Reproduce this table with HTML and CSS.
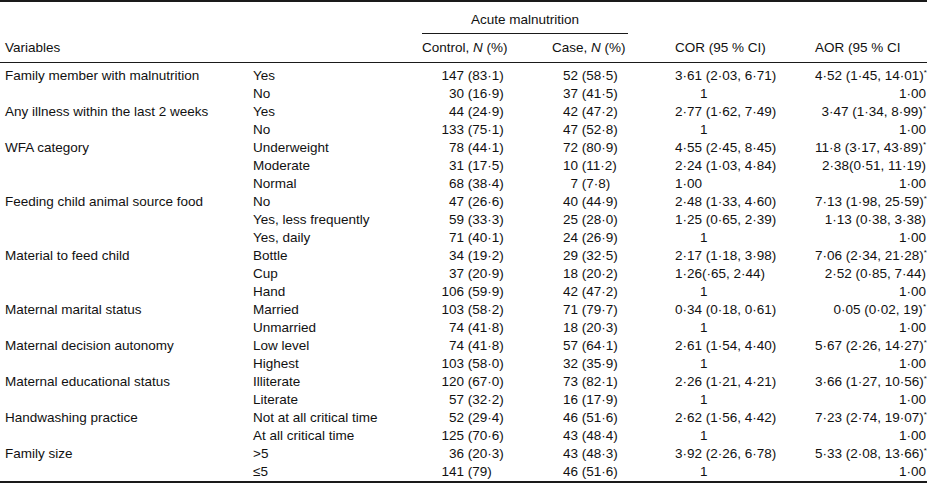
FILE: index.html
```html
<!DOCTYPE html>
<html>
<head>
<meta charset="utf-8">
<link rel="stylesheet" href="styles.css">
</head>
<body>
<table class="tbl">
  <colgroup>
    <col class="c-var"><col class="c-cat"><col class="c-ctl"><col class="c-case"><col class="c-cor"><col class="c-aor">
  </colgroup>
  <thead>
    <tr class="h1">
      <th colspan="2"></th>
      <th colspan="2" class="span"><div class="span-rule">Acute malnutrition</div></th>
      <th></th><th></th>
    </tr>
    <tr class="h2">
      <th colspan="2" class="var">Variables</th>
      <th class="ctl">Control, <i>N</i> (%)</th>
      <th class="case">Case, <i>N</i> (%)</th>
      <th class="cor">COR (95 % CI)</th>
      <th class="aor">AOR (95 % CI</th>
    </tr>
  </thead>
  <tbody>
    <tr class="first"><td class="var">Family member with malnutrition</td><td class="cat">Yes</td><td class="ctl"><div class="np"><span class="n">147</span><span>&nbsp;(83·1)</span></div></td><td class="case"><div class="np"><span class="n">52</span><span>&nbsp;(58·5)</span></div></td><td class="cor">3·61 (2·03, 6·71)</td><td class="aor">4·52 (1·45, 14·01)<sup>*</sup></td></tr>
    <tr><td class="var"></td><td class="cat">No</td><td class="ctl"><div class="np"><span class="n">30</span><span>&nbsp;(16·9)</span></div></td><td class="case"><div class="np"><span class="n">37</span><span>&nbsp;(41·5)</span></div></td><td class="cor one">1</td><td class="aor">1·00</td></tr>
    <tr><td class="var">Any illness within the last 2 weeks</td><td class="cat">Yes</td><td class="ctl"><div class="np"><span class="n">44</span><span>&nbsp;(24·9)</span></div></td><td class="case"><div class="np"><span class="n">42</span><span>&nbsp;(47·2)</span></div></td><td class="cor">2·77 (1·62, 7·49)</td><td class="aor">3·47 (1·34, 8·99)<sup>*</sup></td></tr>
    <tr><td class="var"></td><td class="cat">No</td><td class="ctl"><div class="np"><span class="n">133</span><span>&nbsp;(75·1)</span></div></td><td class="case"><div class="np"><span class="n">47</span><span>&nbsp;(52·8)</span></div></td><td class="cor one">1</td><td class="aor">1·00</td></tr>
    <tr><td class="var">WFA category</td><td class="cat">Underweight</td><td class="ctl"><div class="np"><span class="n">78</span><span>&nbsp;(44·1)</span></div></td><td class="case"><div class="np"><span class="n">72</span><span>&nbsp;(80·9)</span></div></td><td class="cor">4·55 (2·45, 8·45)</td><td class="aor">11·8 (3·17, 43·89)<sup>*</sup></td></tr>
    <tr><td class="var"></td><td class="cat">Moderate</td><td class="ctl"><div class="np"><span class="n">31</span><span>&nbsp;(17·5)</span></div></td><td class="case"><div class="np"><span class="n">10</span><span>&nbsp;(11·2)</span></div></td><td class="cor">2·24 (1·03, 4·84)</td><td class="aor">2·38(0·51, 11·19)</td></tr>
    <tr><td class="var"></td><td class="cat">Normal</td><td class="ctl"><div class="np"><span class="n">68</span><span>&nbsp;(38·4)</span></div></td><td class="case"><div class="np"><span class="n">7</span><span>&nbsp;(7·8)</span></div></td><td class="cor">1·00</td><td class="aor">1·00</td></tr>
    <tr><td class="var">Feeding child animal source food</td><td class="cat">No</td><td class="ctl"><div class="np"><span class="n">47</span><span>&nbsp;(26·6)</span></div></td><td class="case"><div class="np"><span class="n">40</span><span>&nbsp;(44·9)</span></div></td><td class="cor">2·48 (1·33, 4·60)</td><td class="aor">7·13 (1·98, 25·59)<sup>*</sup></td></tr>
    <tr><td class="var"></td><td class="cat">Yes, less frequently</td><td class="ctl"><div class="np"><span class="n">59</span><span>&nbsp;(33·3)</span></div></td><td class="case"><div class="np"><span class="n">25</span><span>&nbsp;(28·0)</span></div></td><td class="cor">1·25 (0·65, 2·39)</td><td class="aor">1·13 (0·38, 3·38)</td></tr>
    <tr><td class="var"></td><td class="cat">Yes, daily</td><td class="ctl"><div class="np"><span class="n">71</span><span>&nbsp;(40·1)</span></div></td><td class="case"><div class="np"><span class="n">24</span><span>&nbsp;(26·9)</span></div></td><td class="cor one">1</td><td class="aor">1·00</td></tr>
    <tr><td class="var">Material to feed child</td><td class="cat">Bottle</td><td class="ctl"><div class="np"><span class="n">34</span><span>&nbsp;(19·2)</span></div></td><td class="case"><div class="np"><span class="n">29</span><span>&nbsp;(32·5)</span></div></td><td class="cor">2·17 (1·18, 3·98)</td><td class="aor">7·06 (2·34, 21·28)<sup>*</sup></td></tr>
    <tr><td class="var"></td><td class="cat">Cup</td><td class="ctl"><div class="np"><span class="n">37</span><span>&nbsp;(20·9)</span></div></td><td class="case"><div class="np"><span class="n">18</span><span>&nbsp;(20·2)</span></div></td><td class="cor">1·26(·65, 2·44)</td><td class="aor">2·52 (0·85, 7·44)</td></tr>
    <tr><td class="var"></td><td class="cat">Hand</td><td class="ctl"><div class="np"><span class="n">106</span><span>&nbsp;(59·9)</span></div></td><td class="case"><div class="np"><span class="n">42</span><span>&nbsp;(47·2)</span></div></td><td class="cor one">1</td><td class="aor">1·00</td></tr>
    <tr><td class="var">Maternal marital status</td><td class="cat">Married</td><td class="ctl"><div class="np"><span class="n">103</span><span>&nbsp;(58·2)</span></div></td><td class="case"><div class="np"><span class="n">71</span><span>&nbsp;(79·7)</span></div></td><td class="cor">0·34 (0·18, 0·61)</td><td class="aor">0·05 (0·02, 19)<sup>*</sup></td></tr>
    <tr><td class="var"></td><td class="cat">Unmarried</td><td class="ctl"><div class="np"><span class="n">74</span><span>&nbsp;(41·8)</span></div></td><td class="case"><div class="np"><span class="n">18</span><span>&nbsp;(20·3)</span></div></td><td class="cor one">1</td><td class="aor">1·00</td></tr>
    <tr><td class="var">Maternal decision autonomy</td><td class="cat">Low level</td><td class="ctl"><div class="np"><span class="n">74</span><span>&nbsp;(41·8)</span></div></td><td class="case"><div class="np"><span class="n">57</span><span>&nbsp;(64·1)</span></div></td><td class="cor">2·61 (1·54, 4·40)</td><td class="aor">5·67 (2·26, 14·27)<sup>*</sup></td></tr>
    <tr><td class="var"></td><td class="cat">Highest</td><td class="ctl"><div class="np"><span class="n">103</span><span>&nbsp;(58·0)</span></div></td><td class="case"><div class="np"><span class="n">32</span><span>&nbsp;(35·9)</span></div></td><td class="cor one">1</td><td class="aor">1·00</td></tr>
    <tr><td class="var">Maternal educational status</td><td class="cat">Illiterate</td><td class="ctl"><div class="np"><span class="n">120</span><span>&nbsp;(67·0)</span></div></td><td class="case"><div class="np"><span class="n">73</span><span>&nbsp;(82·1)</span></div></td><td class="cor">2·26 (1·21, 4·21)</td><td class="aor">3·66 (1·27, 10·56)<sup>*</sup></td></tr>
    <tr><td class="var"></td><td class="cat">Literate</td><td class="ctl"><div class="np"><span class="n">57</span><span>&nbsp;(32·2)</span></div></td><td class="case"><div class="np"><span class="n">16</span><span>&nbsp;(17·9)</span></div></td><td class="cor one">1</td><td class="aor">1·00</td></tr>
    <tr><td class="var">Handwashing practice</td><td class="cat">Not at all critical time</td><td class="ctl"><div class="np"><span class="n">52</span><span>&nbsp;(29·4)</span></div></td><td class="case"><div class="np"><span class="n">46</span><span>&nbsp;(51·6)</span></div></td><td class="cor">2·62 (1·56, 4·42)</td><td class="aor">7·23 (2·74, 19·07)<sup>*</sup></td></tr>
    <tr><td class="var"></td><td class="cat">At all critical time</td><td class="ctl"><div class="np"><span class="n">125</span><span>&nbsp;(70·6)</span></div></td><td class="case"><div class="np"><span class="n">43</span><span>&nbsp;(48·4)</span></div></td><td class="cor one">1</td><td class="aor">1·00</td></tr>
    <tr><td class="var">Family size</td><td class="cat">&gt;5</td><td class="ctl"><div class="np"><span class="n">36</span><span>&nbsp;(20·3)</span></div></td><td class="case"><div class="np"><span class="n">43</span><span>&nbsp;(48·3)</span></div></td><td class="cor">3·92 (2·26, 6·78)</td><td class="aor">5·33 (2·08, 13·66)<sup>*</sup></td></tr>
    <tr class="last"><td class="var"></td><td class="cat">≤5</td><td class="ctl"><div class="np"><span class="n">141</span><span>&nbsp;(79)</span></div></td><td class="case"><div class="np"><span class="n">46</span><span>&nbsp;(51·6)</span></div></td><td class="cor one">1</td><td class="aor">1·00</td></tr>
  </tbody>
</table>
</body>
</html>
```

FILE: styles.css
```css
html, body {
  margin: 0;
  padding: 0;
  background: #fff;
}

.tbl {
  width: 927px;
  border-collapse: separate;
  border-spacing: 0;
  table-layout: fixed;
  font-family: "Liberation Sans", Arial, sans-serif;
  font-size: 13.5px;
  color: #111;
  border-top: 2px solid #1a1a1a;
  border-bottom: 2px solid #1a1a1a;
}

.c-var { width: 248px; }
.c-cat { width: 170px; }
.c-ctl { width: 130px; }
.c-case { width: 123px; }
.c-cor { width: 140px; }
.c-aor { width: 116px; }

th, td {
  padding: 0 0 0 4px;
  text-align: left;
  font-weight: normal;
  white-space: nowrap;
  line-height: 18px;
  vertical-align: top;
}

.h1 th {
  padding-top: 9px;
  padding-bottom: 0;
}

.span-rule {
  width: 206px;
  line-height: 18px;
  text-align: center;
  border-bottom: 1px solid #1a1a1a;
  padding-bottom: 4px;
}

.h2 th {
  line-height: 18px;
  padding-top: 5px;
  padding-bottom: 5px;
  border-bottom: 1px solid #1a1a1a;
}

th.var, td.var {
  padding-left: 5px;
}

td.cat {
  padding-left: 5px;
}

.np {
  display: flex;
  line-height: 18px;
}

.n {
  text-align: right;
  flex: none;
}

td.ctl .n { width: 42px; }
td.case .n { width: 26px; }

td.cor.one {
  padding-left: 29px;
}

td.aor {
  text-align: right;
  padding-right: 1px;
}

sup {
  font-size: 8px;
  line-height: 0;
  vertical-align: 5px;
}

tbody tr.first td {
  padding-top: 4px;
}
```
